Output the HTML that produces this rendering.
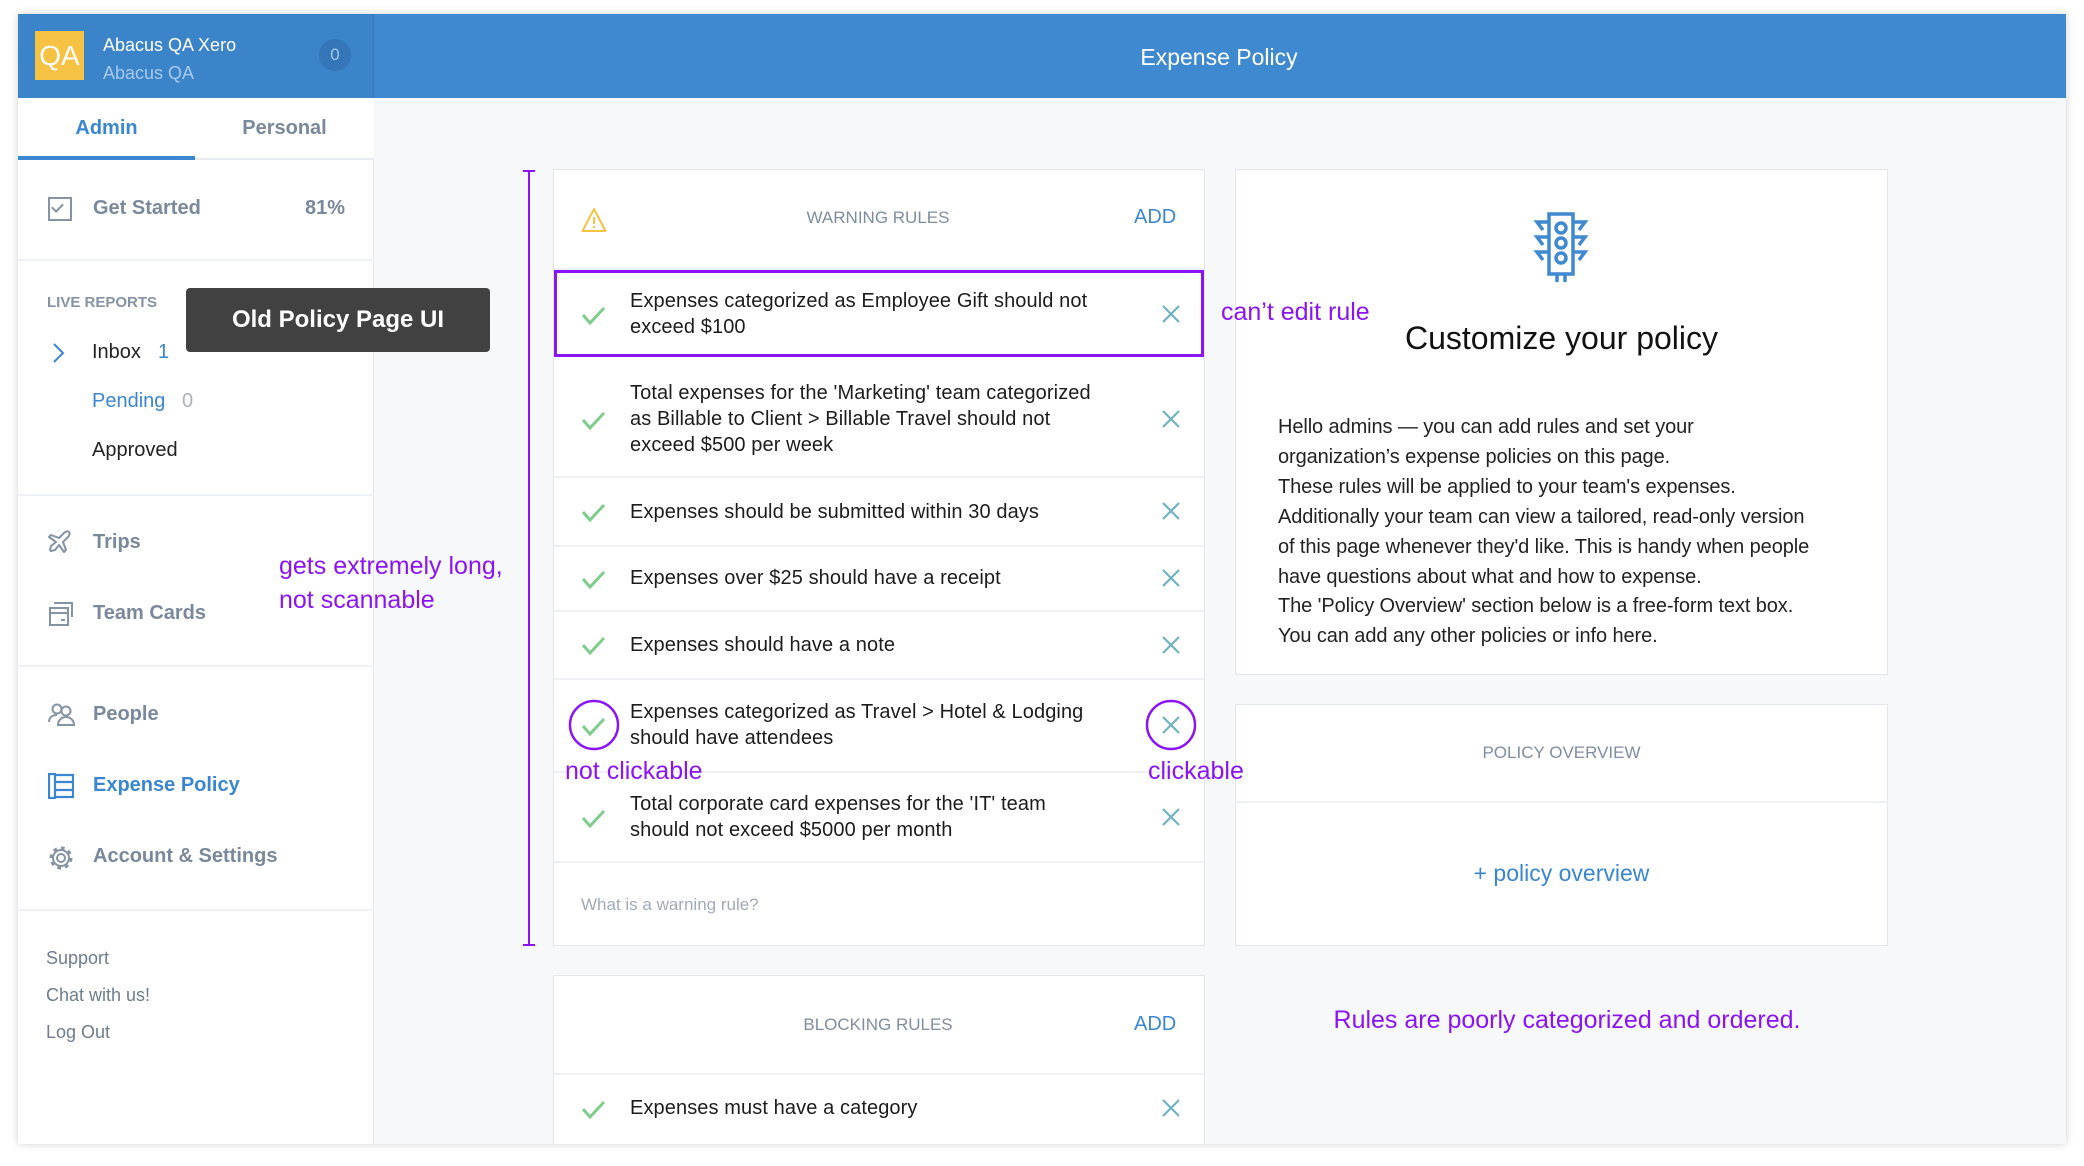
<!DOCTYPE html>
<html><head><meta charset="utf-8"><style>
*{margin:0;padding:0;box-sizing:border-box}
body{width:2084px;height:1166px;background:#fff;font-family:"Liberation Sans",sans-serif;position:relative;overflow:hidden}
.a{position:absolute;white-space:nowrap}
#frame{position:absolute;left:18px;top:14px;width:2048px;height:1130px;background:#f7f8fa;box-shadow:0 0 8px rgba(0,0,0,.18);overflow:hidden}
.side{position:absolute;left:18px;top:98px;width:356px;height:1046px;background:#fff;border-right:1px solid #e4e8ee}
.hr{position:absolute;left:18px;width:356px;height:2px;background:#eef1f5}
.nav{font-size:20px;font-weight:bold;color:#7a889b}
.card{position:absolute;background:#fff;border:1.5px solid #e3e7ec}
.rule{font-size:20px;color:#1c1c1c;line-height:26px;letter-spacing:.1px}
.rowline{position:absolute;left:554px;width:650px;height:1.5px;background:#eef0f3}
.p{color:#8a14f5}
</style></head><body>
<div id="frame"></div>
<!-- header -->
<div class="a" style="left:18px;top:14px;width:2048px;height:84px;background:#3e89d0"></div>
<div class="a" style="left:18px;top:14px;width:356px;height:84px;background:#3b84c9;border-right:1px solid #3577b8"></div>
<div class="a" style="left:35px;top:31px;width:49px;height:49px;background:#f5c243;color:#fff;font-size:28px;line-height:49px;text-align:center">QA</div>
<div class="a" style="left:103px;top:35px;color:#fff;font-size:18px">Abacus QA Xero</div>
<div class="a" style="left:103px;top:63px;color:#a7c8ea;font-size:18px">Abacus QA</div>
<div class="a" style="left:319px;top:39px;width:32px;height:32px;border-radius:50%;background:#3476b8;color:#a7c8ea;font-size:17px;line-height:32px;text-align:center">0</div>
<div class="a" style="left:1019px;top:44px;width:400px;text-align:center;color:#fff;font-size:23px">Expense Policy</div>
<!-- sidebar -->
<div class="side"></div>
<div class="a" style="left:18px;top:98px;width:356px;height:62px;border-bottom:2px solid #e8ecf1;background:#fff"></div>
<div class="a" style="left:18px;top:117px;width:177px;text-align:center;color:#3a86d0;font-size:20px;font-weight:bold">Admin</div>
<div class="a" style="left:195px;top:117px;width:179px;text-align:center;color:#7a889b;font-size:20px;font-weight:bold">Personal</div>
<div class="a" style="left:18px;top:156px;width:177px;height:4px;background:#3a86d0"></div>
<div class="a" style="left:48px;top:197px;width:24px;height:24px;border:2.5px solid #8593a5"></div>
<div class="a" style="left:54px;top:201px;width:7px;height:11px;border-right:2px solid #8593a5;border-bottom:2px solid #8593a5;transform:rotate(45deg)"></div>
<div class="a nav" style="left:93px;top:197px">Get Started</div>
<div class="a nav" style="left:305px;top:197px">81%</div>
<div class="hr" style="top:259px"></div>
<div class="a" style="left:47px;top:294px;font-size:15px;font-weight:bold;color:#8593a5">LIVE REPORTS</div>
<svg class="a" style="left:50px;top:342px" width="16" height="22"><path d="M4 2l9 9-9 9" stroke="#3a86d0" stroke-width="2" fill="none"/></svg>
<div class="a" style="left:92px;top:341px;font-size:20px;color:#222">Inbox</div>
<div class="a" style="left:158px;top:341px;font-size:20px;color:#3a86d0">1</div>
<div class="a" style="left:92px;top:390px;font-size:20px;color:#3a86d0">Pending</div>
<div class="a" style="left:182px;top:390px;font-size:20px;color:#a8b2bf">0</div>
<div class="a" style="left:92px;top:439px;font-size:20px;color:#222">Approved</div>
<div class="hr" style="top:494px"></div>
<svg class="a" style="left:48px;top:530px" width="26" height="26" viewBox="0 0 26 26"><path d="M3 21l4-1 4-5 5 7 2-2-3-8 5-5c2-2 2-4 1-5s-3-1-5 1l-5 5-8-3-2 2 7 5-5 4-1 4z" stroke="#8593a5" stroke-width="2" fill="none" stroke-linejoin="round"/></svg>
<div class="a nav" style="left:93px;top:531px">Trips</div>
<svg class="a" style="left:48px;top:601px" width="26" height="26" viewBox="0 0 26 26"><path d="M6 2h18v14M2 7h18v17H2zM2 12h18M13 19h4" stroke="#8593a5" stroke-width="2" fill="none"/></svg>
<div class="a nav" style="left:93px;top:602px">Team Cards</div>
<div class="hr" style="top:665px"></div>
<svg class="a" style="left:48px;top:702px" width="28" height="24" viewBox="0 0 28 24"><circle cx="9" cy="7" r="4.5" stroke="#8593a5" stroke-width="2" fill="none"/><circle cx="18" cy="9" r="4.5" stroke="#8593a5" stroke-width="2" fill="none"/><path d="M1 20c0-5 4-7 8-7M10 23c0-5 4-8 8-8s8 3 8 8z" stroke="#8593a5" stroke-width="2" fill="none"/></svg>
<div class="a nav" style="left:93px;top:703px">People</div>
<svg class="a" style="left:48px;top:773px" width="26" height="26" viewBox="0 0 26 26"><path d="M1 1h6v24H1zM7 2h18v7H7zM7 9h18v8H7zM7 17h18v7H7z" stroke="#3a86d0" stroke-width="2.2" fill="none"/></svg>
<div class="a nav" style="left:93px;top:774px;color:#3a86d0">Expense Policy</div>
<svg class="a" style="left:47px;top:844px" width="28" height="28" viewBox="0 0 28 28"><circle cx="14" cy="14" r="4" stroke="#8593a5" stroke-width="2" fill="none"/><circle cx="14" cy="14" r="9.5" stroke="#8593a5" stroke-width="4" stroke-dasharray="3.5 3.9" fill="none"/><circle cx="14" cy="14" r="8" stroke="#8593a5" stroke-width="2" fill="none"/></svg>
<div class="a nav" style="left:93px;top:845px">Account &amp; Settings</div>
<div class="hr" style="top:909px"></div>
<div class="a" style="left:46px;top:948px;font-size:18px;color:#6f7c8c">Support</div>
<div class="a" style="left:46px;top:985px;font-size:18px;color:#6f7c8c">Chat with us!</div>
<div class="a" style="left:46px;top:1022px;font-size:18px;color:#6f7c8c">Log Out</div>
<!-- tooltip -->
<div class="a" style="left:186px;top:288px;width:304px;height:64px;background:#414141;border-radius:4px;color:#fff;font-size:24px;font-weight:bold;text-align:center;line-height:64px">Old Policy Page UI</div>
<!-- bracket -->
<div class="a" style="left:528px;top:170px;width:2px;height:776px;background:#8a14f5"></div>
<div class="a" style="left:523px;top:170px;width:12px;height:2px;background:#8a14f5"></div>
<div class="a" style="left:523px;top:944px;width:12px;height:2px;background:#8a14f5"></div>
<!-- warning card -->
<div class="card" style="left:553px;top:169px;width:652px;height:777px"></div>
<svg class="a" style="left:581px;top:207px" width="26" height="26" viewBox="0 0 26 26"><path d="M13 2L1.5 24h23z" stroke="#f5c243" stroke-width="2" fill="none" stroke-linejoin="round"/><path d="M13 10v7M13 19v2" stroke="#f5c243" stroke-width="2"/></svg>
<div class="a" style="left:778px;top:208px;width:200px;text-align:center;font-size:17px;color:#7f8da0">WARNING RULES</div>
<div class="a" style="left:1134px;top:206px;font-size:20px;color:#3a86d0">ADD</div>
<div class="rowline" style="top:268px"></div>
<div class="rowline" style="top:476px"></div>
<div class="rowline" style="top:545px"></div>
<div class="rowline" style="top:610px"></div>
<div class="rowline" style="top:678px"></div>
<div class="rowline" style="top:771px"></div>
<div class="rowline" style="top:861px"></div>
<div class="a" style="left:554px;top:270px;width:650px;height:87px;border:3px solid #8a14f5"></div>
<div class="a rule" style="left:630px;top:288px">Expenses categorized as Employee Gift should not<br>exceed $100</div>
<div class="a rule" style="left:630px;top:380px">Total expenses for the 'Marketing' team categorized<br>as Billable to Client &gt; Billable Travel should not<br>exceed $500 per week</div>
<div class="a rule" style="left:630px;top:499px">Expenses should be submitted within 30 days</div>
<div class="a rule" style="left:630px;top:565px">Expenses over $25 should have a receipt</div>
<div class="a rule" style="left:630px;top:632px">Expenses should have a note</div>
<div class="a rule" style="left:630px;top:699px">Expenses categorized as Travel &gt; Hotel &amp; Lodging<br>should have attendees</div>
<div class="a rule" style="left:630px;top:791px">Total corporate card expenses for the 'IT' team<br>should not exceed $5000 per month</div>
<div class="a" style="left:581px;top:895px;font-size:17px;color:#a0aab7">What is a warning rule?</div>
<!-- right card -->
<div class="card" style="left:1235px;top:169px;width:653px;height:506px"></div>
<svg class="a" style="left:1533px;top:212px" width="56" height="72" viewBox="0 0 56 72"><g stroke="#3e89d0" stroke-width="3.5" fill="none"><rect x="16" y="2" width="24" height="60"/><circle cx="28" cy="16" r="5"/><circle cx="28" cy="31" r="5"/><circle cx="28" cy="46" r="5"/><path d="M16 10h-12l6 8M16 25h-12l6 8M16 40h-12l6 8M40 10h12l-6 8M40 25h12l-6 8M40 40h12l-6 8M24 62v8M32 62v8"/></g></svg>
<div class="a" style="left:1235px;top:320px;width:653px;text-align:center;font-size:32px;color:#111">Customize your policy</div>
<div class="a" style="left:1278px;top:413px;font-size:20px;line-height:29.9px;color:#222;letter-spacing:-.1px">Hello admins — you can add rules and set your<br>organization’s expense policies on this page.<br>These rules will be applied to your team's expenses.<br>Additionally your team can view a tailored, read-only version<br>of this page whenever they'd like. This is handy when people<br>have questions about what and how to expense.<br>The 'Policy Overview' section below is a free-form text box.<br>You can add any other policies or info here.</div>
<div class="card" style="left:1235px;top:704px;width:653px;height:242px"></div>
<div class="a" style="left:1235px;top:801px;width:653px;height:1.5px;background:#eef0f3"></div>
<div class="a" style="left:1235px;top:743px;width:653px;text-align:center;font-size:17px;color:#7f8da0">POLICY OVERVIEW</div>
<div class="a" style="left:1235px;top:860px;width:653px;text-align:center;font-size:23px;color:#3a86d0">+ policy overview</div>
<!-- blocking card -->
<div class="card" style="left:553px;top:975px;width:652px;height:169px;border-bottom:none"></div>
<div class="rowline" style="top:1073px"></div>
<div class="a" style="left:778px;top:1015px;width:200px;text-align:center;font-size:17px;color:#7f8da0">BLOCKING RULES</div>
<div class="a" style="left:1134px;top:1013px;font-size:20px;color:#3a86d0">ADD</div>
<div class="a rule" style="left:630px;top:1095px">Expenses must have a category</div>
<!-- checks & x -->
<svg class="a" style="left:0;top:0" width="2084" height="1166">
<g stroke="#7fcc8c" stroke-width="3" fill="none">
<path d="M583 315l7 8 14-15"/><path d="M583 420l7 8 14-15"/><path d="M583 512l7 8 14-15"/><path d="M583 579l7 8 14-15"/><path d="M583 645l7 8 14-15"/><path d="M583 726l7 8 14-15"/><path d="M583 818l7 8 14-15"/><path d="M583 1109l7 8 14-15"/>
</g>
<g stroke="#6fb2c2" stroke-width="2.2">
<path d="M1163 306l16 16M1179 306l-16 16"/><path d="M1163 411l16 16M1179 411l-16 16"/><path d="M1163 503l16 16M1179 503l-16 16"/><path d="M1163 570l16 16M1179 570l-16 16"/><path d="M1163 637l16 16M1179 637l-16 16"/><path d="M1163 717l16 16M1179 717l-16 16"/><path d="M1163 809l16 16M1179 809l-16 16"/><path d="M1163 1100l16 16M1179 1100l-16 16"/>
</g>
<circle cx="594" cy="725" r="24" stroke="#8a14f5" stroke-width="2.5" fill="none"/>
<circle cx="1171" cy="725" r="24" stroke="#8a14f5" stroke-width="2.5" fill="none"/>
</svg>
<!-- annotations -->
<div class="a p" style="left:279px;top:549px;font-size:25px;line-height:34px">gets extremely long,<br>not scannable</div>
<div class="a p" style="left:565px;top:757px;font-size:25px">not clickable</div>
<div class="a p" style="left:1148px;top:757px;font-size:25px">clickable</div>
<div class="a p" style="left:1221px;top:298px;font-size:25px">can’t edit rule</div>
<div class="a p" style="left:1267px;top:1006px;width:600px;text-align:center;font-size:25px">Rules are poorly categorized and ordered.</div>
</body></html>
